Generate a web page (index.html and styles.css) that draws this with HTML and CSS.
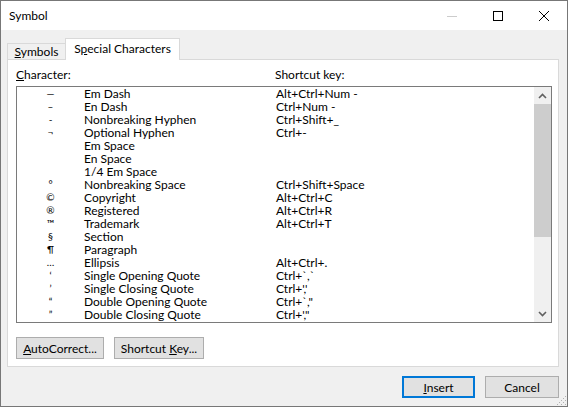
FILE: index.html
```html
<!DOCTYPE html>
<html>
<head>
<meta charset="utf-8">
<link rel="stylesheet" href="styles.css">
</head>
<body>
<div class="window">
  <div class="titlebar">
    <div class="title">Symbol</div>
    <div class="caption-btns">
      <div class="cbtn"><svg width="10" height="10" viewBox="0 0 10 10"><line x1="0" y1="5.5" x2="10" y2="5.5" stroke="#cccccc" stroke-width="1"/></svg></div>
      <div class="cbtn"><svg width="10" height="10" viewBox="0 0 10 10"><rect x="0.5" y="0.5" width="9" height="9" fill="none" stroke="#000" stroke-width="1"/></svg></div>
      <div class="cbtn"><svg width="10" height="10" viewBox="0 0 10 10"><path d="M0 0 L10 10 M10 0 L0 10" stroke="#000" stroke-width="1"/></svg></div>
    </div>
  </div>
  <div class="body">
    <div class="tabs">
      <div class="tab"><span><u>S</u>ymbols</span></div>
      <div class="tab tab-sel"><span>S<u>p</u>ecial Characters</span></div>
    </div>
    <div class="panel">
      <div class="labels">
        <div class="lbl-char"><u>C</u>haracter:</div>
        <div class="lbl-key">Shortcut key:</div>
      </div>
      <div class="listbox">
        <div class="rows">
          <div class="row"><span class="sym">—</span><span class="name">Em Dash</span><span class="key">Alt+Ctrl+Num -</span></div>
          <div class="row"><span class="sym">–</span><span class="name">En Dash</span><span class="key">Ctrl+Num -</span></div>
          <div class="row"><span class="sym">-</span><span class="name">Nonbreaking Hyphen</span><span class="key">Ctrl+Shift+_</span></div>
          <div class="row"><span class="sym">¬</span><span class="name">Optional Hyphen</span><span class="key">Ctrl+-</span></div>
          <div class="row"><span class="sym"></span><span class="name">Em Space</span><span class="key"></span></div>
          <div class="row"><span class="sym"></span><span class="name">En Space</span><span class="key"></span></div>
          <div class="row"><span class="sym"></span><span class="name">1/4 Em Space</span><span class="key"></span></div>
          <div class="row"><span class="sym">°</span><span class="name">Nonbreaking Space</span><span class="key">Ctrl+Shift+Space</span></div>
          <div class="row"><span class="sym">©</span><span class="name">Copyright</span><span class="key">Alt+Ctrl+C</span></div>
          <div class="row"><span class="sym">®</span><span class="name">Registered</span><span class="key">Alt+Ctrl+R</span></div>
          <div class="row"><span class="sym">™</span><span class="name">Trademark</span><span class="key">Alt+Ctrl+T</span></div>
          <div class="row"><span class="sym">§</span><span class="name">Section</span><span class="key"></span></div>
          <div class="row"><span class="sym">¶</span><span class="name">Paragraph</span><span class="key"></span></div>
          <div class="row"><span class="sym">…</span><span class="name">Ellipsis</span><span class="key">Alt+Ctrl+.</span></div>
          <div class="row"><span class="sym">‘</span><span class="name">Single Opening Quote</span><span class="key">Ctrl+`,`</span></div>
          <div class="row"><span class="sym">’</span><span class="name">Single Closing Quote</span><span class="key">Ctrl+','</span></div>
          <div class="row"><span class="sym">“</span><span class="name">Double Opening Quote</span><span class="key">Ctrl+`,"</span></div>
          <div class="row"><span class="sym">”</span><span class="name">Double Closing Quote</span><span class="key">Ctrl+',"</span></div>
        </div>
        <div class="scrollbar">
          <div class="sb-btn"><svg width="9" height="6" viewBox="0 0 9 6"><polyline points="1,5 4.5,1.5 8,5" fill="none" stroke="#606060" stroke-width="1.6"/></svg></div>
          <div class="sb-thumb"></div>
          <div class="sb-track"></div>
          <div class="sb-btn"><svg width="9" height="6" viewBox="0 0 9 6"><polyline points="1,1 4.5,4.5 8,1" fill="none" stroke="#606060" stroke-width="1.6"/></svg></div>
        </div>
      </div>
      <div class="panel-btns">
        <div class="btn btn-auto"><span><u>A</u>utoCorrect...</span></div>
        <div class="btn btn-short"><span>Shortcut <u>K</u>ey...</span></div>
      </div>
    </div>
    <div class="footer">
      <div class="btn btn-default"><span><u>I</u>nsert</span></div>
      <div class="btn btn-cancel"><span>Cancel</span></div>
    </div>
  </div>
  <svg class="grip" width="11" height="11" viewBox="0 0 11 11">
    <g fill="#b0b0b0">
      <rect x="9" y="1" width="1" height="1"/><rect x="7" y="3" width="1" height="1"/><rect x="5" y="5" width="1" height="1"/><rect x="3" y="7" width="1" height="1"/><rect x="1" y="9" width="1" height="1"/>
      <rect x="9" y="5" width="1" height="1"/><rect x="7" y="7" width="1" height="1"/><rect x="5" y="9" width="1" height="1"/>
      <rect x="9" y="9" width="1" height="1"/>
    </g>
  </svg>
</div>
</body>
</html>
```
FILE: styles.css
```css
html, body {
  margin: 0;
  padding: 0;
  background: #f0f0f0;
}
* { box-sizing: border-box; }

.window {
  position: relative;
  width: 568px;
  height: 407px;
  border: 1px solid #777777;
  background: #f0f0f0;
  display: flex;
  flex-direction: column;
  font-family: Lato, "Liberation Sans", sans-serif;
  font-size: 12px;
  color: #000;
}

.titlebar {
  height: 29px;
  background: #ffffff;
  display: flex;
  align-items: stretch;
  flex-shrink: 0;
}
.title {
  flex: 1;
  padding-left: 8px;
  display: flex;
  align-items: center;
  font-size: 12px;
}
.caption-btns { display: flex; }
.cbtn {
  width: 46px;
  display: flex;
  align-items: center;
  justify-content: center;
}
.cbtn svg { display: block; }

.body {
  flex: 1;
  display: flex;
  flex-direction: column;
  padding-left: 6px;
  padding-right: 8px;
}

.tabs {
  display: flex;
  align-items: flex-end;
  margin-top: 8px;
  height: 21px;
}
.tab {
  height: 16px;
  width: 58px;
  border: 1px solid #d9d9d9;
  border-bottom: none;
  border-right: none;
  background: #f0f0f0;
  text-align: center;
  line-height: 14px;
  padding-top: 1px;
}
.tab-sel {
  position: relative;
  z-index: 1;
  width: 115px;
  height: 22px;
  margin-bottom: -1px;
  background: #ffffff;
  border-right: 1px solid #d9d9d9;
  line-height: 19px;
  padding-top: 0;
}

.panel {
  width: 552px;
  height: 308px;
  background: #ffffff;
  border: 1px solid #d9d9d9;
  padding: 8px 6px 0 8px;
  display: flex;
  flex-direction: column;
}

.labels {
  display: flex;
  height: 13px;
  line-height: 13px;
  margin-bottom: 5px;
}
.lbl-char { width: 259px; }

.listbox {
  width: 536px;
  height: 237px;
  border: 1px solid #7a7a7a;
  display: flex;
}
.rows {
  flex: 1;
  display: flex;
  flex-direction: column;
}
.row {
  display: flex;
  height: 13px;
  line-height: 13px;
  white-space: pre;
}
.sym {
  width: 67px;
  text-align: center;
  font-size: 10px;
  line-height: 13px;
}
.name { width: 192px; }

.scrollbar {
  width: 17px;
  display: flex;
  flex-direction: column;
  background: #f0f0f0;
}
.sb-btn {
  height: 17px;
  display: flex;
  align-items: center;
  justify-content: center;
}
.sb-btn svg { display: block; }
.sb-thumb {
  height: 133px;
  background: #cdcdcd;
}
.sb-track { flex: 1; }

.panel-btns {
  display: flex;
  gap: 10px;
  margin-top: 14px;
}

.btn {
  height: 22px;
  background: #e1e1e1;
  border: 1px solid #adadad;
  display: flex;
  align-items: center;
  justify-content: center;
  white-space: pre;
}
.btn-auto { width: 88px; }
.btn-short { width: 90px; }

.footer {
  display: flex;
  justify-content: flex-end;
  gap: 10px;
  margin-top: 9px;
}
.btn-default {
  width: 73px;
  border: 2px solid #0078d7;
}
.btn-cancel { width: 74px; }

.grip {
  position: absolute;
  right: 0;
  bottom: 0;
}
```
